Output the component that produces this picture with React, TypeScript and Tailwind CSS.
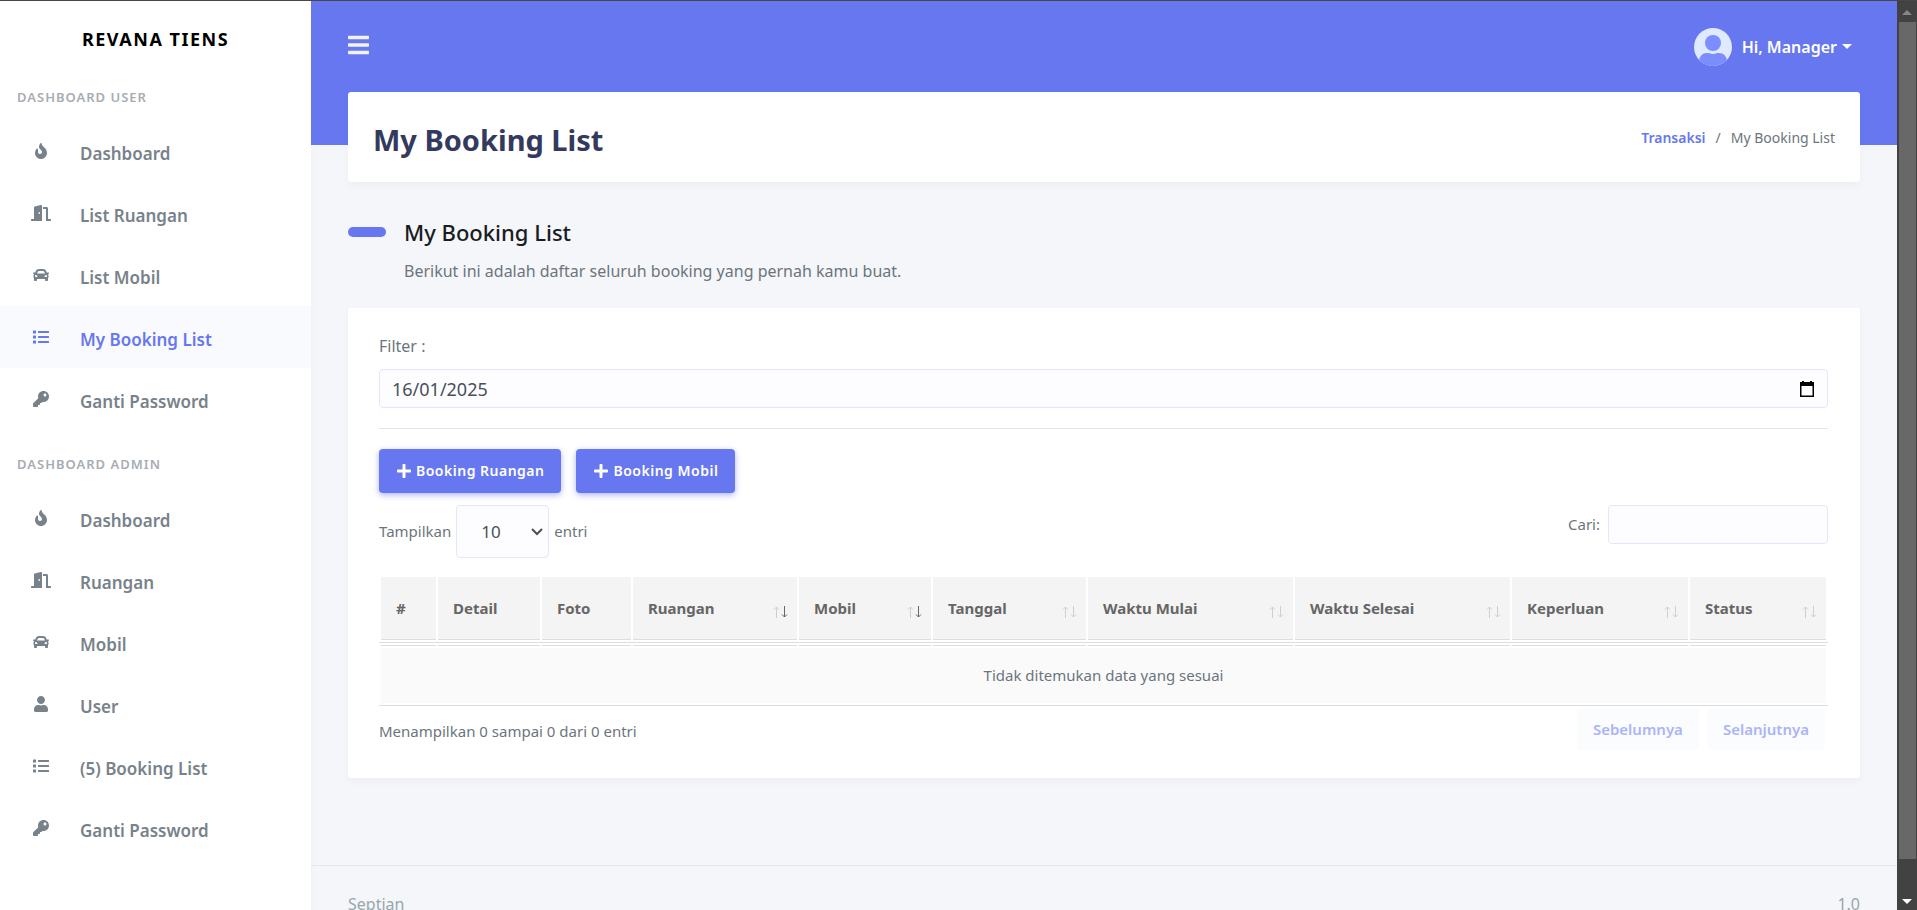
import type { ReactNode } from "react";
import type { IconType } from "react-icons";
import { FaBars, FaCar, FaDoorOpen, FaFire, FaKey, FaList, FaPlus, FaUser } from "react-icons/fa";

type NavEntry = { label: string; icon: IconType; active?: boolean };

const userNav: NavEntry[] = [
  { label: "Dashboard", icon: FaFire },
  { label: "List Ruangan", icon: FaDoorOpen },
  { label: "List Mobil", icon: FaCar },
  { label: "My Booking List", icon: FaList, active: true },
  { label: "Ganti Password", icon: FaKey },
];

const adminNav: NavEntry[] = [
  { label: "Dashboard", icon: FaFire },
  { label: "Ruangan", icon: FaDoorOpen },
  { label: "Mobil", icon: FaCar },
  { label: "User", icon: FaUser },
  { label: "(5) Booking List", icon: FaList },
  { label: "Ganti Password", icon: FaKey },
];

type Column = { label: string; width: string; sort?: "none" | "desc" };

const columns: Column[] = [
  { label: "#", width: "w-[58px]" },
  { label: "Detail", width: "w-[104px]" },
  { label: "Foto", width: "w-[91px]" },
  { label: "Ruangan", width: "w-[166px]", sort: "desc" },
  { label: "Mobil", width: "w-[134px]", sort: "desc" },
  { label: "Tanggal", width: "w-[155px]", sort: "none" },
  { label: "Waktu Mulai", width: "w-[207px]", sort: "none" },
  { label: "Waktu Selesai", width: "w-[217px]", sort: "none" },
  { label: "Keperluan", width: "w-[178px]", sort: "none" },
  { label: "Status", width: "w-[139px]", sort: "none" },
];

function NavGroup({ title, items }: { title: string; items: NavEntry[] }) {
  return (
    <section>
      <h2 className="px-[17px] text-[13px] leading-5 font-semibold tracking-[1px] text-[#a7adb3] uppercase">{title}</h2>
      <ul className="pt-[13px]">
        {items.map(({ label, icon: Icon, active }) => (
          <li key={label}>
            <a
              href="#"
              className={
                active
                  ? "flex h-[62px] items-center bg-[#f9fafd] text-[#6777ef]"
                  : "flex h-[62px] items-center text-[#78828a]"
              }
            >
              <span className="mr-3.5 ml-4 flex w-[50px] justify-center">
                <Icon className="h-4 w-5" />
              </span>
              <span className="pt-1.5 text-[17px] font-semibold">{label}</span>
            </a>
          </li>
        ))}
      </ul>
    </section>
  );
}

function Sidebar() {
  return (
    <aside className="w-[311px] shrink-0 bg-white shadow-[0_4px_8px_rgba(0,0,0,0.03)]">
      <a href="#" className="block py-[26px] text-center text-lg leading-6 font-bold tracking-[1.5px] text-black uppercase">
        Revana Tiens
      </a>
      <div className="flex flex-col gap-6 pt-2.5">
        <NavGroup title="Dashboard User" items={userNav} />
        <NavGroup title="Dashboard Admin" items={adminNav} />
      </div>
    </aside>
  );
}

function Avatar() {
  return (
    <svg viewBox="0 0 38 38" className="size-[38px]" aria-hidden="true">
      <clipPath id="face">
        <circle cx="19" cy="19" r="19" />
      </clipPath>
      <g clipPath="url(#face)">
        <rect width="38" height="38" fill="#dfe9ff" />
        <circle cx="19" cy="15" r="8" fill="#7b8dff" />
        <path d="M5 38V33q1-8 8-8h2q4 2 8 0h2q7 0 8 8v5z" fill="#7b8dff" />
      </g>
    </svg>
  );
}

function SortMark({ desc }: { desc: boolean }) {
  return (
    <svg viewBox="0 0 16 12" className="h-3 w-4 shrink-0" fill="none" aria-hidden="true">
      <path d="M4.500 12V1M2 3.500L4.500 1L7 3.500" stroke="#cfcfcf" />
      <path d="M12.500 0v11M10 8.500l2.500 2.500L15 8.500" stroke={desc ? "#666666" : "#cfcfcf"} />
    </svg>
  );
}

function PrimaryButton({ children }: { children: ReactNode }) {
  return (
    <button
      type="button"
      className="flex h-11 items-center gap-1 rounded bg-[#6777ef] px-[17px] text-sm font-semibold tracking-[0.5px] text-white shadow-[0_2px_6px_#acb5f6]"
    >
      <FaPlus className="size-4" />
      {children}
    </button>
  );
}

function BookingTable() {
  return (
    <table className="w-full table-fixed border-separate border-spacing-0 text-[15px]">
      <thead>
        <tr>
          {columns.map(({ label, width, sort }) => (
            <th key={label} scope="col" className={`${width} border-b border-[#dddddd] px-px pb-0.5 text-left font-bold text-[#666666] first:pl-0.5 last:pr-0.5`}>
              <div className="flex h-[63px] items-center justify-between border-b border-[#dddddd] bg-[#f4f4f4] pr-[9px] pl-[15px]">
                <span className="whitespace-nowrap">{label}</span>
                {sort && (
                  <span className="pt-2">
                    <SortMark desc={sort === "desc"} />
                  </span>
                )}
              </div>
            </th>
          ))}
        </tr>
      </thead>
      <tbody>
        <tr aria-hidden="true">
          {columns.map(({ label }) => (
            <td key={label} className="px-px pt-0.5 first:pl-0.5 last:pr-0.5">
              <div className="h-px bg-[#dddddd]" />
            </td>
          ))}
        </tr>
        <tr>
          <td colSpan={10} className="border-b border-[#dddddd] p-0.5 text-center text-[#6c757d]">
            <div className="flex h-[55px] items-center justify-center bg-[#fafafa]">Tidak ditemukan data yang sesuai</div>
          </td>
        </tr>
      </tbody>
    </table>
  );
}

function BrowserScrollbar() {
  return (
    <div className="flex w-5 shrink-0 flex-col items-center bg-[#424242]" aria-hidden="true">
      <svg viewBox="0 0 20 21" className="h-[21px] w-5">
        <path d="M10 9l5 5H5z" fill="#868686" />
      </svg>
      <div className="w-[17px] flex-1 bg-[#686868]" />
      <svg viewBox="0 0 20 51" className="h-[51px] w-5">
        <path d="M10 45l5-5H5z" fill="#ffffff" />
      </svg>
    </div>
  );
}

export default function App() {
  return (
    <div className="flex h-screen overflow-hidden border-t border-[#474747] bg-[#f4f6f9] font-['Noto_Sans','Open_Sans',sans-serif] text-[#6c757d]">
      <Sidebar />
      <div className="flex min-w-0 flex-1 flex-col">
        <div className="h-36 shrink-0 bg-[#6777ef]">
          <nav className="flex h-[91px] items-center justify-between px-[37px]">
            <button type="button" aria-label="Menu" className="pb-1 text-[#f2f2f2]">
              <FaBars className="h-6 w-[21px]" />
            </button>
            <button type="button" className="flex items-center gap-2.5 pr-2 text-base font-semibold text-white">
              <Avatar />
              <span className="flex items-center gap-[5px]">
                Hi, Manager
                <svg viewBox="0 0 10 6" className="h-1.5 w-2.5" aria-hidden="true">
                  <path d="M0 0h10L5 5z" fill="currentColor" />
                </svg>
              </span>
            </button>
          </nav>
        </div>
        <main className="-mt-[53px] shrink-0 px-[37px]">
          <header className="flex h-[90px] items-center justify-between rounded-[3px] bg-white px-[25px] shadow-[0_4px_8px_rgba(0,0,0,0.03)]">
            <h1 className="pt-1.5 text-[29px] font-bold text-[#34395e]">My Booking List</h1>
            <nav className="flex gap-2.5 text-[14px]">
              <a href="#" className="font-semibold text-[#6777ef]">
                Transaksi
              </a>
              <span>/</span>
              <span>My Booking List</span>
            </nav>
          </header>
          <h2 className="flex items-center pt-[34px] text-[22px] leading-8 font-medium text-[#191d21]">
            <span className="mr-[18px] h-2.5 w-[38px] rounded-full bg-[#6777ef]" />
            My Booking List
          </h2>
          <p className="pt-[11px] pl-14 text-base leading-6">
            Berikut ini adalah daftar seluruh booking yang pernah kamu buat.
          </p>
          <section className="mt-[25px] rounded-[3px] bg-white pt-[26px] pr-8 pb-7 pl-[31px] shadow-[0_4px_8px_rgba(0,0,0,0.03)]">
            <label htmlFor="filter-date" className="block pb-[11px] text-base leading-6">
              Filter :
            </label>
            <div className="flex h-[39px] items-center rounded border border-[#e4e6fc] bg-[#fdfdff] px-3">
              <input
                id="filter-date"
                type="text"
                defaultValue="16/01/2025"
                className="min-w-0 flex-1 bg-transparent text-lg text-[#495057] outline-none"
              />
              <svg viewBox="0 0 16 18" className="h-[18px] w-4" aria-hidden="true">
                <path d="M3 1h2v1h6V1h2v1h2v15H1V2h2zM2.500 6v9.500h11V6z" fill="#000000" fillRule="evenodd" />
              </svg>
            </div>
            <hr className="my-5 border-[#e5e5e5]" />
            <div className="flex gap-[15px]">
              <PrimaryButton>Booking Ruangan</PrimaryButton>
              <PrimaryButton>Booking Mobil</PrimaryButton>
            </div>
            <div className="flex items-start justify-between pt-3 pb-[19px] text-[15px]">
              <label className="flex items-center gap-[5px]">
                Tampilkan
                <span className="relative flex items-center">
                  <select className="h-[53px] w-[93px] appearance-none rounded border border-[#e4e6fc] bg-[#fdfdff] pl-6 text-[17px] text-[#495057]">
                    <option>10</option>
                  </select>
                  <svg viewBox="0 0 12 8" className="pointer-events-none absolute right-1.5 h-2 w-3" aria-hidden="true">
                    <path d="M1 1l5 5 5-5" fill="none" stroke="#495057" strokeWidth="2" />
                  </svg>
                </span>
                entri
              </label>
              <label className="flex items-center gap-2">
                Cari:
                <input type="search" className="h-[39px] w-[220px] rounded border border-[#e4e6fc] bg-[#fdfdff] px-3" />
              </label>
            </div>
            <BookingTable />
            <div className="flex items-start justify-between pt-0.5 text-[15px]">
              <p className="pt-[11px] leading-6">Menampilkan 0 sampai 0 dari 0 entri</p>
              <div className="flex gap-2 pr-[3px] font-semibold text-[#abb4f7]">
                <button type="button" disabled className="h-[42px] rounded bg-[#fbfcfe] px-4">
                  Sebelumnya
                </button>
                <button type="button" disabled className="h-[42px] rounded bg-[#fbfcfe] px-4">
                  Selanjutnya
                </button>
              </div>
            </div>
          </section>
        </main>
        <footer className="mt-[87px] flex shrink-0 justify-between border-t border-[#e3eaef] px-[37px] pt-[26px] text-base text-[#98a6ad]">
          <span>Septian</span>
          <span>1.0</span>
        </footer>
      </div>
      <BrowserScrollbar />
    </div>
  );
}
